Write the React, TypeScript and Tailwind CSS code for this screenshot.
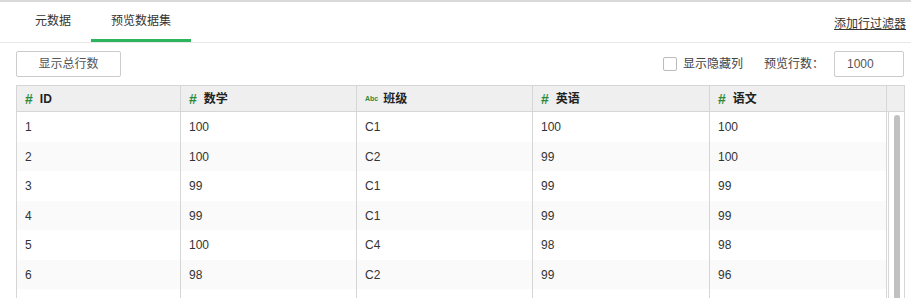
import React from "react";

const columns = [
  { name: "ID", type: "num", width: "w-[164px]" },
  { name: "数学", type: "num", width: "w-[176px]" },
  { name: "班级", type: "str", width: "w-[176px]" },
  { name: "英语", type: "num", width: "w-[177px]" },
  { name: "语文", type: "num", width: "w-[177px]" },
];

const rows = [
  ["1", "100", "C1", "100", "100"],
  ["2", "100", "C2", "99", "100"],
  ["3", "99", "C1", "99", "99"],
  ["4", "99", "C1", "99", "99"],
  ["5", "100", "C4", "98", "98"],
  ["6", "98", "C2", "99", "96"],
  ["", "", "", "", ""],
];

const TypeIcon = ({ type }: { type: string }) =>
  type === "num" ? (
    <span className="text-[14px] font-bold text-[#2f8a3a] mr-[7px] leading-none">#</span>
  ) : (
    <span className="text-[7px] text-[#2f8a3a] mr-[5px] leading-none">Abc</span>
  );

export default function App() {
  return (
    <div
      className="w-[911px] h-[298px] overflow-hidden bg-white text-[12px] text-[#333]"
      style={{ fontFamily: '"Liberation Sans", "Noto Sans CJK SC", sans-serif' }}
    >
      {/* Tabs */}
      <div className="border-t-2 border-[#dadada] border-b border-b-[#e8e8e8] flex items-center justify-between">
        <div className="flex ml-[15px]">
          <div className="h-[40px] px-5 flex items-center border-b-[3px] border-transparent">元数据</div>
          <div className="h-[40px] px-5 flex items-center border-b-[3px] border-[#2db55d]">预览数据集</div>
        </div>
        <a href="#" className="mr-[5px] mt-[4px] underline text-[#333]">
          添加行过滤器
        </a>
      </div>

      {/* Toolbar */}
      <div className="h-[42px] flex items-center justify-between pl-4 pr-[7px]">
        <button className="w-[105px] h-[26px] border border-[#ccc] rounded-[2px] text-[#555] bg-white">
          显示总行数
        </button>
        <div className="flex items-center">
          <span className="w-[14px] h-[14px] border border-[#bbb] rounded-[2px] mr-[6px]"></span>
          <span className="text-[#444]">显示隐藏列</span>
          <span className="ml-[21px] text-[#444]">预览行数：</span>
          <div className="ml-[10px] w-[70px] h-[26px] border border-[#ccc] rounded-[2px] flex items-center pl-[12px] text-[#555]">
            1000
          </div>
        </div>
      </div>

      {/* Table */}
      <div className="ml-4 w-[889px] border border-[#d6d6d6]">
        <div className="flex h-[26px] bg-[#efefef] border-b border-[#d6d6d6]">
          {columns.map((c) => (
            <div
              key={c.name}
              className={`${c.width} border-r border-[#d6d6d6] flex items-center pl-[8px] font-bold text-[#222]`}
            >
              <TypeIcon type={c.type} />
              {c.name}
            </div>
          ))}
          <div className="w-[17px]"></div>
        </div>
        <div className="flex">
          <div className="flex flex-col">
            {rows.map((r, i) => (
              <div
                key={i}
                className={`flex ${i % 2 === 0 ? "h-[30px] bg-white" : "h-[29px] bg-[#fafafa]"}`}
              >
                {r.map((v, j) => (
                  <div
                    key={j}
                    className={`${columns[j].width} border-r border-[#d6d6d6] flex items-center pl-[8px]`}
                  >
                    {v}
                  </div>
                ))}
              </div>
            ))}
          </div>
          <div className="w-[17px] pl-[1px] flex">
            <div className="flex-1 border-l border-[#d6d6d6] pt-[3px] flex justify-center">
              <div className="w-[6px] h-[200px] bg-[#c1c1c1] rounded-t-[3px]"></div>
            </div>
          </div>
        </div>
      </div>
    </div>
  );
}
